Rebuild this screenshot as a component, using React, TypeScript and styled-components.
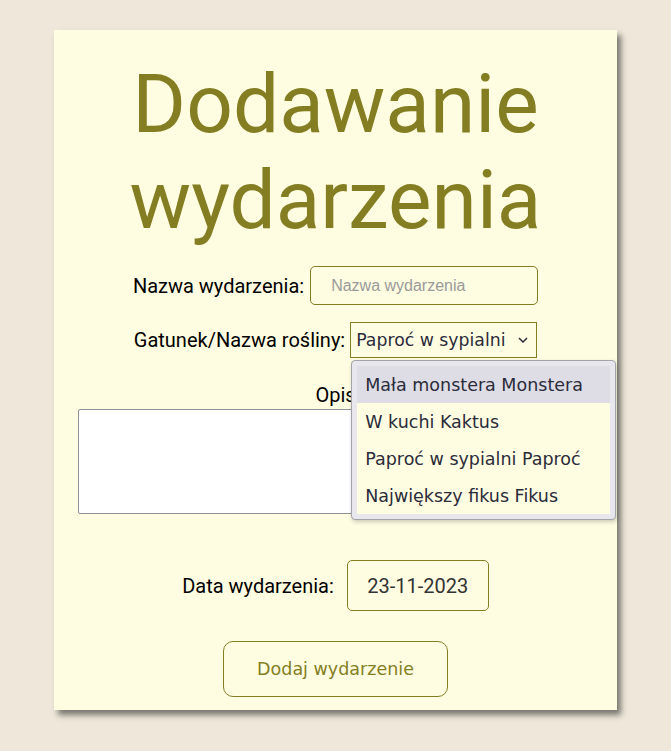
import React from 'react';
import styled, { createGlobalStyle } from 'styled-components';

const GlobalStyle = createGlobalStyle`
  html, body {
    margin: 0;
    padding: 0;
    background: #efe8da;
  }
  body {
    font-family: Roboto, "Liberation Sans", sans-serif;
  }
`;

const Page = styled.div`
  min-height: 751px;
  padding-top: 30px;
  box-sizing: border-box;
`;

const Card = styled.div`
  width: 563px;
  margin: 0 auto;
  padding: 26px 24px 13px;
  box-sizing: border-box;
  background: #fffde1;
  box-shadow: 4px 5px 6px rgba(40, 40, 40, 0.6);
  display: flex;
  flex-direction: column;
  align-items: center;
`;

const Title = styled.h1`
  margin: 0;
  font-family: Roboto, sans-serif;
  font-weight: 400;
  font-size: 82px;
  line-height: 96px;
  color: #847d22;
  text-align: center;
`;

const Row = styled.div<{ $top: number; $gap: number }>`
  display: flex;
  align-items: center;
  justify-content: center;
  gap: ${(p) => p.$gap}px;
  margin-top: ${(p) => p.$top}px;
`;

const Label = styled.label`
  font-family: Roboto, sans-serif;
  font-size: 20px;
  color: #000;
`;

const TextInput = styled.input`
  width: 228px;
  height: 39px;
  box-sizing: border-box;
  padding: 0 20px;
  border: 1px solid #847d22;
  border-radius: 5px;
  background: #fffde1;
  font-family: "Liberation Sans", Arial, sans-serif;
  font-size: 16px;
  color: #333;
  outline: none;
  &::placeholder {
    color: #9a9a9a;
  }
`;

const SelectWrap = styled.div`
  position: relative;
`;

const SelectBox = styled.div`
  width: 187px;
  height: 36px;
  box-sizing: border-box;
  padding: 0 8px 0 5px;
  border: 1px solid #847d22;
  background: #fffde1;
  display: flex;
  align-items: center;
  justify-content: space-between;
  font-family: "DejaVu Sans", Tahoma, sans-serif;
  font-size: 17.3px;
  color: #2b2b3a;
`;

const Dropdown = styled.ul`
  position: absolute;
  top: 38px;
  left: 1px;
  width: 265px;
  margin: 0;
  padding: 5px;
  box-sizing: border-box;
  list-style: none;
  background: #e8e7ee;
  border: 1px solid #a3a3aa;
  border-radius: 4px;
  box-shadow: 1px 2px 4px rgba(0, 0, 0, 0.2);
  z-index: 5;
`;

const Option = styled.li<{ $active?: boolean }>`
  height: 37px;
  display: flex;
  align-items: center;
  padding-left: 8px;
  background: ${(p) => (p.$active ? '#dedde6' : '#fffde1')};
  font-family: "DejaVu Sans", Tahoma, sans-serif;
  font-size: 17.5px;
  color: #2b2b3a;
  white-space: nowrap;
`;

const DescLabel = styled.label`
  margin-top: 27px;
  font-family: Roboto, sans-serif;
  font-size: 20px;
  line-height: 21px;
  color: #000;
`;

const TextArea = styled.textarea`
  display: block;
  width: 515px;
  height: 105px;
  margin-top: 3px;
  box-sizing: border-box;
  border: 1px solid #8f8f9d;
  border-radius: 2px;
  background: #fff;
  resize: none;
  outline: none;
`;

const DateInput = styled.input`
  width: 142px;
  height: 51px;
  box-sizing: border-box;
  border: 1px solid #847d22;
  border-radius: 5px;
  background: #fffde1;
  text-align: center;
  font-family: Roboto, sans-serif;
  font-size: 20px;
  color: #333;
  outline: none;
`;

const SubmitButton = styled.button`
  margin-top: 30px;
  width: 225px;
  height: 56px;
  border: 1px solid #847d22;
  border-radius: 10px;
  background: #fffde1;
  font-family: "DejaVu Sans", Tahoma, sans-serif;
  font-size: 17.5px;
  color: #847d22;
  cursor: pointer;
`;

const plants = [
  'Mała monstera Monstera',
  'W kuchi Kaktus',
  'Paproć w sypialni Paproć',
  'Największy fikus Fikus',
];

const App: React.FC = () => {
  return (
    <Page>
      <GlobalStyle />
      <Card>
        <Title>
          Dodawanie
          <br />
          wydarzenia
        </Title>
        <Row $top={18} $gap={6}>
          <Label>Nazwa wydarzenia:</Label>
          <TextInput placeholder="Nazwa wydarzenia" />
        </Row>
        <Row $top={17} $gap={5}>
          <Label>Gatunek/Nazwa rośliny:</Label>
          <SelectWrap>
            <SelectBox>
              <span>Paproć w sypialni</span>
              <svg width="10" height="6" viewBox="0 0 10 6">
                <path d="M1 1l4 4 4-4" fill="none" stroke="#2b2b3a" strokeWidth="1.5" />
              </svg>
            </SelectBox>
            <Dropdown>
              {plants.map((p, i) => (
                <Option key={p} $active={i === 0}>
                  {p}
                </Option>
              ))}
            </Dropdown>
          </SelectWrap>
        </Row>
        <DescLabel>Opis</DescLabel>
        <TextArea />
        <Row $top={46} $gap={13}>
          <Label>Data wydarzenia:</Label>
          <DateInput readOnly value="23-11-2023" />
        </Row>
        <SubmitButton>Dodaj wydarzenie</SubmitButton>
      </Card>
    </Page>
  );
};

export default App;
